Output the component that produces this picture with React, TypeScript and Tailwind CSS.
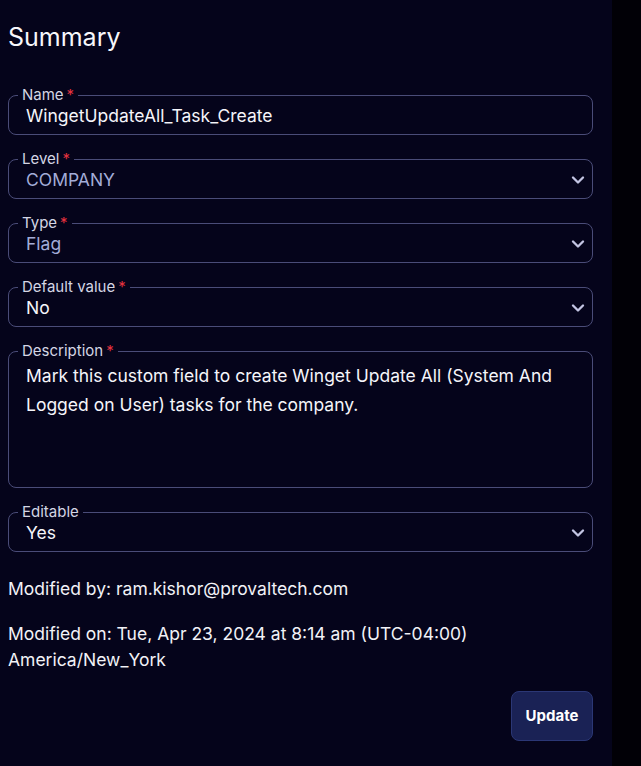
import { ChevronDown } from "lucide-react"

type FieldProps = {
  label: string
  required?: boolean
  children: React.ReactNode
}

function Field({ label, required, children }: FieldProps) {
  return (
    <fieldset className="border border-[#4a4c78] rounded-lg pl-[9px] pr-0 pb-[5px] m-0 min-w-0">
      <legend className="px-[4px] text-[15px] leading-4 text-[#d4d6e4]">
        {label}
        {required && <span className="text-[#e5323f] ml-[3px]">*</span>}
      </legend>
      {children}
    </fieldset>
  )
}

function SelectField({ label, required, value, muted }: { label: string; required?: boolean; value: string; muted?: boolean }) {
  return (
    <Field label={label} required={required}>
      <div className="flex items-center h-[26px]">
        <select
          defaultValue={value}
          className={`appearance-none bg-transparent flex-1 pl-[8px] h-[26px] text-[17.5px] leading-[26px] outline-none ${muted ? "text-[#a3acd8]" : "text-[#f5f5fa]"}`}
        >
          <option className="bg-[#06051c]">{value}</option>
        </select>
        <ChevronDown size={20} strokeWidth={2.8} className="text-[#c3c5e3] shrink-0 mr-[4px]" />
      </div>
    </Field>
  )
}

export default function App() {
  return (
    <div className="min-h-screen w-full bg-[#010006] flex font-['Inter',sans-serif]">
      <div className="w-[612px] min-h-[766px] bg-[#05041b] pl-[8px] pr-[19px] text-[#f2f2f7]">
        <h2 className="pt-[21px] text-[25px] leading-8 font-normal text-[#f7f7fb]">Summary</h2>

        <form className="mt-[34px] flex flex-col gap-[16px]" onSubmit={(e) => e.preventDefault()}>
          <Field label="Name" required>
            <input
              defaultValue="WingetUpdateAll_Task_Create"
              className="w-full bg-transparent pl-[8px] h-[26px] text-[17.5px] leading-[26px] text-[#f5f5fa] outline-none"
            />
          </Field>

          <SelectField label="Level" required value="COMPANY" muted />
          <SelectField label="Type" required value="Flag" muted />
          <SelectField label="Default value" required value="No" />

          <Field label="Description" required>
            <textarea
              readOnly
              defaultValue="Mark this custom field to create Winget Update All (System And Logged on User) tasks for the company."
              className="w-full resize-none bg-transparent pl-[8px] pr-[20px] pt-[2px] h-[123px] text-[17.5px] leading-[29px] text-[#f5f5fa] outline-none block"
            />
          </Field>

          <SelectField label="Editable" value="Yes" />
        </form>

        <p className="mt-[24px] text-[17.5px] leading-[26px]">Modified by: ram.kishor@provaltech.com</p>
        <p className="mt-[19px] text-[17.5px] leading-[26px]">
          Modified on: Tue, Apr 23, 2024 at 8:14 am (UTC-04:00)
          <br />
          America/New_York
        </p>

        <div className="flex justify-end mt-[18px]">
          <button
            type="button"
            className="w-[82px] h-[50px] rounded-lg bg-[#1a2255] border border-[#2b3775] text-[15px] font-bold text-white"
          >
            Update
          </button>
        </div>
      </div>
    </div>
  )
}
